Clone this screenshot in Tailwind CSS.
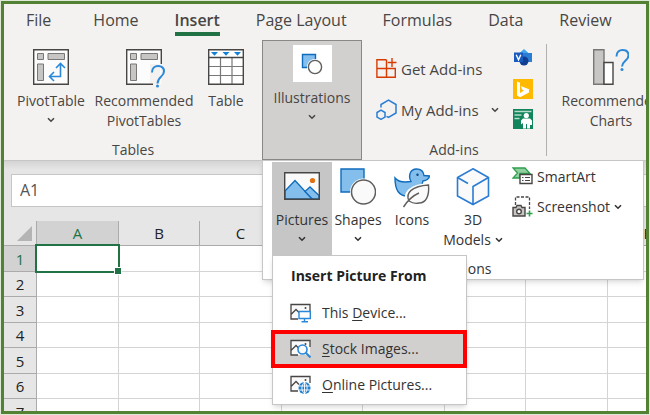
<!DOCTYPE html>
<html lang="en">
<head>
    <meta charset="UTF-8">
    <meta name="viewport" content="width=device-width, initial-scale=1.0">
    <title>Insert Stock Images</title>
    <script src="https://cdn.jsdelivr.net/npm/@tailwindcss/browser@4"></script>
    <style>
        body {
            font-family: 'Open Sans', 'Noto Sans', sans-serif;
        }
    </style>
</head>
<body class="h-screen overflow-hidden bg-[#dfe9d8] p-px text-sm leading-5 text-[#484644]">
    <!-- shared icons -->
    <svg class="hidden">
        <symbol id="chevron" viewBox="0 0 8 6"><path d="M1 1.2 4 4.2 7 1.2" fill="none" stroke="currentColor" stroke-width="1.6"/></symbol>
        <symbol id="pivot" viewBox="0 0 36 36">
            <path d="M.7.7H35.3V35.3H.7Z" fill="#fcfcfc"/>
            <path d="M4.500 4.500h6v6h-6zM15 4.500h16.500v6H15zM4.500 15h6v16.500h-6z" fill="#c8c6c4" stroke="#797775"/>
        </symbol>
        <symbol id="photo" viewBox="0 0 21 20">
            <path d="M1 16V1.500H20V16Z" fill="#fafafa"/>
            <path d="M8 16H1V1.500H20V8M1 11.500 6 6.500 9 9.500" fill="none" stroke="#484644" stroke-width="1.300"/>
            <circle cx="15.500" cy="5" r="1" fill="#484644"/>
        </symbol>
    </svg>

    <div class="relative flex h-full flex-col overflow-hidden border-[3px] border-[#548235] bg-[#f3f2f1]">
        <!-- tabs -->
        <nav class="flex h-9 shrink-0 gap-9 overflow-hidden whitespace-nowrap pl-[22px] pt-1.5 text-base/5">
            <a href="#">File</a>
            <a href="#" class="ml-1.5">Home</a>
            <a href="#" class="h-[26px] border-b-4 border-[#217346] font-semibold">Insert</a>
            <a href="#">Page Layout</a>
            <a href="#">Formulas</a>
            <a href="#">Data</a>
            <a href="#">Review</a>
        </nav>

        <!-- ribbon -->
        <div class="flex h-[120px] shrink-0">
            <section class="flex w-[258px] shrink-0 flex-col justify-between">
                <div class="flex items-start pl-3 pt-[9px]">
                    <button class="flex w-[70px] flex-col items-center gap-1.5 whitespace-nowrap">
                        <svg class="size-9" viewBox="0 0 36 36" fill="none">
                            <use href="#pivot"/>
                            <path d="M.7.7H35.3V35.3H.7Z" stroke="#484644" stroke-width="1.400"/>
                            <path d="M16.500 27.500H27.500V15M21 23l-4.500 4.500L21 32M23 19l4.500-4.500L32 19" stroke="#2b88d8" stroke-width="1.600"/>
                        </svg>
                        <span class="flex flex-col items-center">PivotTable<svg class="mt-1.5 h-1.5 w-2"><use href="#chevron"/></svg></span>
                    </button>
                    <button class="ml-1.5 flex w-[104px] flex-col items-center gap-1.5">
                        <svg class="size-9 overflow-visible" viewBox="0 0 36 36" fill="none">
                            <use href="#pivot"/>
                            <path d="M24 15H34V35H24Z" fill="#f3f2f1"/>
                            <path d="M35.300 15V.7H.7V35.300H27" stroke="#484644" stroke-width="1.400"/>
                            <path d="M26 23.500C26 19 29 17 32 17c4 0 6 2.500 6 5.500 0 5-6.500 5.500-6.500 12" stroke="#2b88d8" stroke-width="2"/>
                            <circle cx="31.500" cy="37" r="1.500" fill="#2b88d8"/>
                        </svg>
                        <span>Recommended PivotTables</span>
                    </button>
                    <button class="ml-2 flex w-11 flex-col items-center gap-1.5">
                        <svg class="size-9" viewBox="0 0 36 36" fill="none">
                            <path d="M.7.7H35.300V35.300H.7Z" fill="#fff"/>
                            <path d="M12.500 8V35M24 8V35M1 17.500H35M1 26.500H35" stroke="#797775" stroke-width="1.200"/>
                            <path d="M.7.7H35.300V35.300H.7ZM1 8.500H35" stroke="#484644" stroke-width="1.400"/>
                            <path d="M3 3h7L6.500 6.800ZM14.500 3h7L18 6.800ZM26 3h7L29.500 6.800Z" fill="#1181d6"/>
                        </svg>
                        <span>Table</span>
                    </button>
                </div>
                <h2 class="text-center">Tables</h2>
            </section>

            <button class="flex w-[100px] shrink-0 flex-col items-center border border-[#8a8886] bg-[#d2d0ce] pt-1">
                <span class="flex h-[37px] w-[39px] items-center justify-center bg-white">
                    <svg class="h-[22px] w-[22px]" viewBox="0 0 22 22">
                        <path d="M1.500 1.500h13v13h-13z" fill="#83beec" stroke="#0f6cbd" stroke-width="1.400"/>
                        <circle cx="14" cy="14" r="8" fill="#fff"/>
                        <circle cx="14" cy="14" r="6.600" fill="#fff" stroke="#605e5c" stroke-width="1.400"/>
                    </svg>
                </span>
                <span class="mt-1.5">Illustrations</span>
                <svg class="mt-1.5 h-1.5 w-2"><use href="#chevron"/></svg>
            </button>

            <section class="flex w-[184px] shrink-0 flex-col justify-between">
                <div class="flex justify-between pl-3.5 pr-[13px] pt-[9px]">
                    <div class="flex flex-col gap-5 pt-[9px] text-[15px]">
                        <button class="flex items-center gap-1 whitespace-nowrap">
                            <svg class="h-[21px] w-[21px]" viewBox="0 0 21 21" fill="none" stroke="#d83b01" stroke-width="1.400">
                                <path d="M10.500 1.700H.9V19.300H19.300V10.500H.9M10.500 1.700V19.300M16 0V9M11.700 4.500H20.500"/>
                            </svg>
                            Get Add-ins
                        </button>
                        <button class="flex items-center gap-1 whitespace-nowrap">
                            <svg class="h-[21px] w-[21px]" viewBox="0 0 21 21" fill="none" stroke="#2b7cd3" stroke-width="1.500">
                                <path d="M5 8.500V5.500L12.500 1.200 20 5.500V14L12.500 18.500 10.500 17.300M5 11.200l4 2.300v4.600L5 20.300 1 18.100V13.500Z"/>
                            </svg>
                            My Add-ins
                            <svg class="ml-2 h-1.5 w-2"><use href="#chevron"/></svg>
                        </button>
                    </div>
                    <div class="flex flex-col gap-2.5">
                        <button aria-label="Visio Data Visualizer">
                            <svg class="h-5 w-5" viewBox="0 0 20 20">
                                <path d="M11 0l5 4.500-5 4.500-5-4.500Z" fill="#41a5ee"/>
                                <path d="M9 4h10v9H9z" fill="#2b7cd3"/>
                                <circle cx="11" cy="12" r="4.500" fill="#103f91"/>
                                <path d="M1 3.500h9v9.500H1z" fill="#185abd"/>
                                <path d="M3.200 5.800 5.500 10.800 7.800 5.800" fill="none" stroke="#fff" stroke-width="1.400"/>
                            </svg>
                        </button>
                        <button aria-label="Bing Maps">
                            <svg class="h-5 w-5" viewBox="0 0 20 20">
                                <path d="M0 0h20v20H0z" fill="#ffb900"/>
                                <path d="M4 2.500 7 3.700V14l4-2.500-2-1L7.700 7 16 10.200V13.500L7 18.300 4 16.500Z" fill="#fff"/>
                            </svg>
                        </button>
                        <button aria-label="People Graph">
                            <svg class="h-5 w-5" viewBox="0 0 20 20">
                                <path d="M0 0h20v20H0z" fill="#10845a"/>
                                <path d="M1.500 2.500h17M1.500 6h7M1.500 9.500h5" stroke="#b7dccb" stroke-width="1.300"/>
                                <circle cx="13.300" cy="6.500" r="2.600" fill="#fff"/>
                                <path d="M8 11.500 10 9.500h7l2 2V16h-2v3.500h-3V15h-1v4.500h-3V14L8 15.500Z" fill="#fff"/>
                            </svg>
                        </button>
                    </div>
                </div>
                <h2 class="text-center">Add-ins</h2>
            </section>

            <section class="my-1 flex-1 overflow-hidden border-l border-[#b3b0ad] pl-3 pt-[5px]">
                <button class="flex w-[104px] flex-col items-center gap-1.5">
                    <svg class="size-9" viewBox="0 0 36 36" fill="none">
                        <path d="M.7.7H11V35.300H.7Z" fill="#c8c6c4" stroke="#797775" stroke-width="1.400"/>
                        <path d="M11 13.500H20V35.300H11Z" fill="#fff" stroke="#484644" stroke-width="1.400"/>
                        <path d="M23.500 7.500C23.500 3 26.500 1 29.500 1c4 0 6 2.500 6 5.500 0 5-6.500 5.500-6.500 11" stroke="#2b88d8" stroke-width="2"/>
                        <circle cx="29" cy="20.500" r="1.500" fill="#2b88d8"/>
                    </svg>
                    <span>Recommended Charts</span>
                </button>
            </section>
        </div>

        <!-- name box -->
        <div class="flex h-[61px] shrink-0 flex-col justify-center border-t border-[#c8c6c4] bg-linear-to-b from-[#d4d4d4] to-[#e6e6e6] to-15% pb-0.5 pl-[7px]">
            <input type="text" value="A1" aria-label="Name Box" class="h-[33px] w-full border border-r-0 border-[#c6c6c6] bg-white pl-2 text-base text-[#555]">
        </div>

        <!-- sheet -->
        <div class="relative flex-1 bg-white">
            <table class="w-[687px] table-fixed border-separate border-spacing-0 text-center text-[15px] text-[#222]">
                <thead class="bg-[#e6e6e6]">
                    <tr class="h-[25px] *:border-b *:border-r *:border-[#ababab] *:p-0 *:font-normal">
                        <th class="w-[33px]" aria-label="Select all"><svg class="ml-auto mr-1 size-[15px]" viewBox="0 0 15 15"><path d="M15 0V15H0Z" fill="#b4b4b4"/></svg></th>
                        <th class="w-[82px] bg-[#d2d2d2] text-[#217346]">A</th>
                        <th class="w-[81px]">B</th>
                        <th class="w-[82px]">C</th>
                        <th class="w-[81px]">D</th>
                        <th class="w-[82px]">E</th>
                        <th class="w-[81px]">F</th>
                        <th class="w-[82px]">G</th>
                        <th>H</th>
                    </tr>
                </thead>
                <tbody id="rows"></tbody>
            </table>
            <div class="absolute left-[31px] top-[23px] h-[29px] w-[85px] border-2 border-[#217346]">
                <div class="absolute -bottom-1 -right-1 size-2 border border-white bg-[#217346]"></div>
            </div>
        </div>

        <!-- illustrations menu -->
        <div class="absolute left-[258px] top-[156px] flex h-[120px] w-[382px] flex-col justify-between border border-[#c6c6c6] bg-white pl-[9px] pt-px text-[#333] shadow-md">
            <div class="flex">
                <button class="flex h-[93px] w-[60px] flex-col items-center bg-[#c6c6c6] pt-1.5">
                    <svg class="h-10 w-9" viewBox="0 0 36 40">
                        <path d="M.7 4.700H35.300V31.300H.7Z" fill="#fafafa"/>
                        <path d="M1 23 11 12.500 28 30.800H1Z" fill="#83beec" stroke="#0f6cbd" stroke-width="1.300"/>
                        <path d="M21 23.500 26 19l9 8.500V30.800H28Z" fill="#83beec" stroke="#0f6cbd" stroke-width="1.300"/>
                        <path d="M.7 4.700H35.300V31.300H.7Z" fill="none" stroke="#484644" stroke-width="1.400"/>
                        <circle cx="28.500" cy="12.500" r="2.600" fill="#e3700d"/>
                    </svg>
                    <span class="mt-0.5">Pictures</span>
                    <svg class="mt-1.5 h-1.5 w-2"><use href="#chevron"/></svg>
                </button>
                <button class="flex h-[93px] w-[52px] flex-col items-center pt-1.5">
                    <svg class="h-10 w-9" viewBox="0 0 36 40">
                        <path d="M1 1H24V24H1Z" fill="#83beec" stroke="#0f6cbd" stroke-width="1.400"/>
                        <circle cx="23.500" cy="24" r="13.500" fill="#fff"/>
                        <circle cx="23.500" cy="24" r="12" fill="#fafafa" stroke="#605e5c" stroke-width="1.500"/>
                    </svg>
                    <span class="mt-0.5">Shapes</span>
                    <svg class="mt-1.5 h-1.5 w-2"><use href="#chevron"/></svg>
                </button>
                <button class="flex h-[93px] w-14 flex-col items-center pt-1.5">
                    <svg class="h-10 w-9" viewBox="0 0 36 40">
                        <path d="M1 10C4 14 10 14.500 17 13.500 14 8 16 1 22.500 1 27 1 29.500 4 30 7.500L35.500 8C35 11 32 12.500 29 13 27.500 16 29 17 29 20 28 26 22 28 13 28 5 28 1 22 1 10Z" fill="#83beec" stroke="#0f6cbd" stroke-width="1.400"/>
                        <circle cx="23.500" cy="6.800" r="1.200" fill="#0f4a85"/>
                        <path d="M34.500 17C35.500 28 32 35 25 35 21 36 17 35 14 33 10 25 18 18 34.500 17Z" fill="#fafafa" stroke="#fff" stroke-width="4"/>
                        <path d="M34.500 17C35.500 28 32 35 25 35 21 36 18 35 15 33 11 25 18 18 34.500 17Z" fill="#fafafa" stroke="#605e5c" stroke-width="1.400"/>
                        <path d="M9.500 39C14 32 18 28 25 25" fill="none" stroke="#605e5c" stroke-width="1.400"/>
                    </svg>
                    <span class="mt-0.5">Icons</span>
                </button>
                <button class="flex h-[93px] w-[66px] flex-col items-center pt-1.5">
                    <svg class="h-10 w-9" viewBox="0 0 36 40">
                        <path d="M18 .8 33.500 9.500V28L18 36.500 2.500 28V9.500Z" fill="#fafafa"/>
                        <path d="M18 .8 33.500 9.500V28L18 36.500 2.500 28V9.500ZM33.500 9.500 18 18.500V36.500M2.500 9.500 13 15.500" fill="none" stroke="#2b7cd3" stroke-width="1.600"/>
                    </svg>
                    <span class="mt-0.5">3D</span>
                    <span class="flex items-center gap-1">Models<svg class="h-1.5 w-2"><use href="#chevron"/></svg></span>
                </button>
                <div class="flex flex-col gap-[9px] pl-1.5 pt-1">
                    <button class="flex items-center gap-1">
                        <svg class="h-[21px] w-[21px]" viewBox="0 0 21 21">
                            <path d="M1 2H13L18 7.500H8V12H1L5.500 7Z" fill="#92d19f" stroke="#2f9e4f" stroke-width="1.300"/>
                            <path d="M8 8.500H20V17.500H8Z" fill="#fff" stroke="#484644" stroke-width="1.400"/>
                            <path d="M10 11.500h1.500M10 14.500h1.500M13 11.500h5M13 14.500h5" stroke="#484644" stroke-width="1.200"/>
                        </svg>
                        SmartArt
                    </button>
                    <button class="flex items-center gap-1">
                        <svg class="h-[21px] w-[21px]" viewBox="0 0 21 21">
                            <path d="M3.500 9V1H17.500V13" fill="none" stroke="#484644" stroke-width="1.300" stroke-dasharray="3 1.500"/>
                            <path d="M1 11.500H4L5 9.500H9L10 11.500H13V20H1Z" fill="#c8c6c4" stroke="#484644" stroke-width="1.400"/>
                            <circle cx="7" cy="15.500" r="2.300" fill="#fff" stroke="#484644" stroke-width="1.400"/>
                            <path d="M17.500 14.500V20.500M14.500 17.500H20.500" stroke="#2f9e4f" stroke-width="1.600"/>
                        </svg>
                        Screenshot
                        <svg class="h-1.5 w-2"><use href="#chevron"/></svg>
                    </button>
                </div>
            </div>
            <h2 class="-ml-[9px] text-center">Illustrations</h2>
        </div>

        <!-- pictures submenu -->
        <div class="absolute left-[268px] top-[251px] h-[150px] w-[195px] border border-[#c6c6c6] bg-white text-[#333] shadow-md">
            <h3 class="pb-[9px] pt-2.5 pl-[18px] font-bold text-[#222]">Insert Picture From</h3>
            <button class="flex h-9 w-full items-center gap-[11px] pl-[17px]">
                <svg class="h-5 w-[21px]" viewBox="0 0 21 20">
                    <use href="#photo"/>
                    <path d="M9 8.500H20.300V15.500H9ZM14.500 15.500V18.500M11.500 18.700H18" fill="#fff" stroke="#2b88d8" stroke-width="1.400"/>
                </svg>
                <span>This <u class="underline-offset-2">D</u>evice...</span>
            </button>
            <button class="-mx-0.5 -my-px flex h-[38px] w-[196px] items-center gap-[11px] border-4 border-[#fe0000] bg-[#d2d0ce] pl-[15px]">
                <svg class="h-5 w-[21px]" viewBox="0 0 21 20">
                    <use href="#photo"/>
                    <circle cx="12.500" cy="10.500" r="4.500" fill="#fafafa" stroke="#2b88d8" stroke-width="1.600"/>
                    <path d="M15.800 13.800 20.500 18.500" stroke="#2b88d8" stroke-width="2"/>
                </svg>
                <span><u class="underline-offset-2">S</u>tock Images...</span>
            </button>
            <button class="flex h-9 w-full items-center gap-[11px] pl-[17px]">
                <svg class="h-5 w-[21px]" viewBox="0 0 21 20">
                    <use href="#photo"/>
                    <circle cx="14.500" cy="13" r="6" fill="#1f7fd0"/>
                    <path d="M9 11H20M9 15H20M14.500 7V19M14.500 7C11 11 11 15 14.500 19 18 15 18 11 14.500 7" fill="none" stroke="#fff" stroke-width=".9"/>
                </svg>
                <span><u class="underline-offset-2">O</u>nline Pictures...</span>
            </button>
        </div>
    </div>

    <script>
        const rows = document.getElementById('rows');
        for (let i = 1; i <= 7; i++) {
            const head = i === 1 ? 'bg-[#d2d2d2] text-[#217346]' : 'bg-[#e6e6e6]';
            rows.innerHTML += `<tr class="even:h-[25px] odd:h-[26px]">
                <th class="border-b border-r border-[#ababab] p-0 font-normal ${head}">${i}</th>
                ${'<td class="border-b border-r border-[#d4d4d4] p-0"></td>'.repeat(8)}
            </tr>`;
        }
    </script>
</body>
</html>
